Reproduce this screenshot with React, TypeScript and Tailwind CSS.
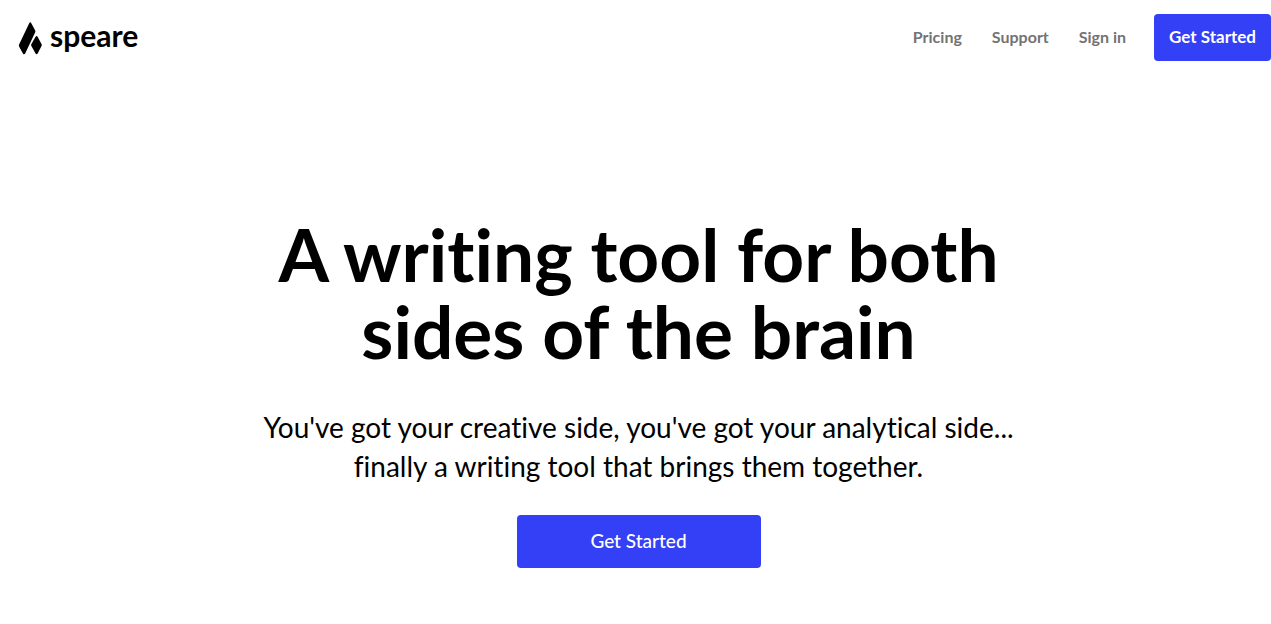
import type { ReactNode } from "react";

function Logo() {
  return (
    <a href="#" className="flex items-center gap-2 text-black">
      <svg aria-hidden="true" viewBox="0 0 24 34" className="h-[34px] w-6" fill="currentColor">
        <path d="M11.2 2.2 Q12.3 0.4 13.3 2.2 L17.2 9.6 Q17.6 10.6 17.1 11.6 L7.4 32 Q6.2 34.4 4.9 32.4 L1.2 25.8 Q0.6 24.7 1.1 23.5 Z" />
        <path d="M17.6 15.7 Q18.6 14.2 19.6 15.7 L23.5 22.9 Q24 24 23.5 25.1 L19.8 32.2 Q18.6 34.2 17.4 32.2 L13.4 25.1 Q12.9 24 13.4 22.9 Z" />
      </svg>
      <span className="pb-1.5 text-[30px] leading-8 font-bold">speare</span>
    </a>
  );
}

function NavLink({ children }: { children: ReactNode }) {
  return (
    <a href="#" className="text-[#737373] hover:text-black">
      {children}
    </a>
  );
}

export default function App() {
  return (
    <div className="min-h-screen bg-white font-['Lato','Inter',sans-serif] text-black [font-variant-ligatures:none]">
      <header className="flex items-center justify-between pt-3.5 pl-[18px]">
        <Logo />
        <nav className="flex items-center gap-7 font-bold">
          <div className="flex gap-[30px] pb-0.5 text-base">
            <NavLink>Pricing</NavLink>
            <NavLink>Support</NavLink>
            <NavLink>Sign in</NavLink>
          </div>
          <button type="button" className="h-[47px] rounded bg-[#3340f5] px-[15px] pb-0.5 text-[17px] text-white">
            Get Started
          </button>
        </nav>
      </header>
      <main className="flex flex-col items-center pt-[155px] pl-1.5 text-center">
        <h1 className="max-w-4xl text-[73px] leading-[77px] font-bold">
          A writing tool for both
          <br />
          sides of the brain
        </h1>
        <p className="mt-[38px] text-[28px] leading-[39px]">
          You've got your creative side, you've got your analytical side...
          <br />
          finally a writing tool that brings them together.
        </p>
        <button type="button" className="mt-[29px] h-[53px] w-[244px] rounded bg-[#3340f5] text-[19px] font-medium text-white">
          Get Started
        </button>
      </main>
    </div>
  );
}
